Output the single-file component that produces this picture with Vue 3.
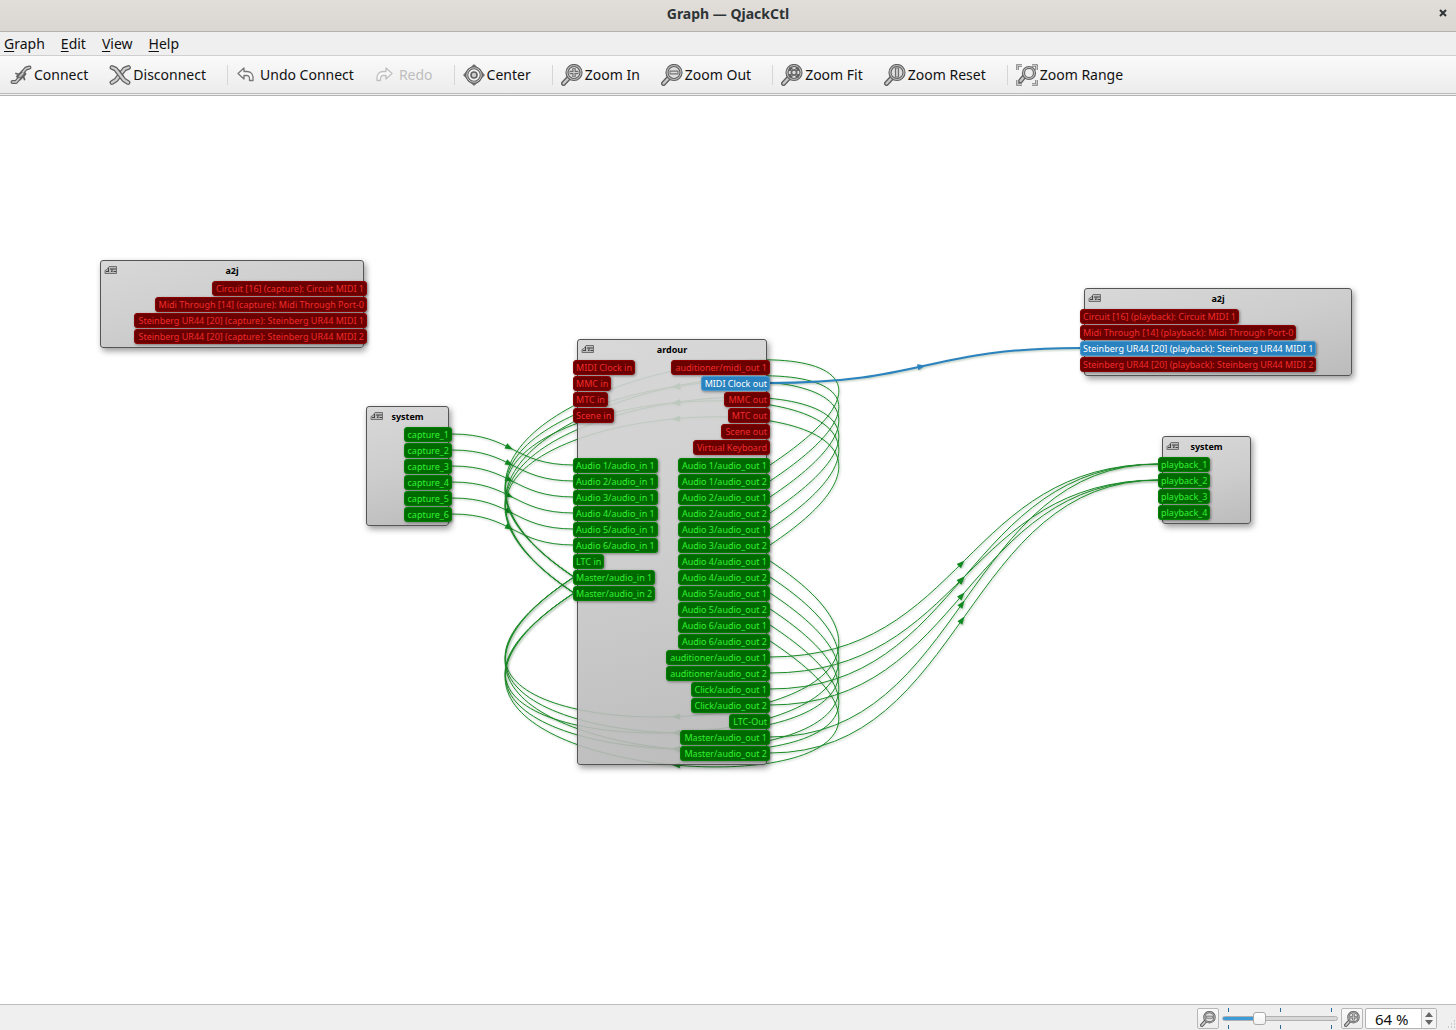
<script setup>
const menus = ['Graph', 'Edit', 'View', 'Help']

const tools = [
  { id: 'connect', label: 'Connect' },
  { id: 'disconnect', label: 'Disconnect' },
  { sep: true },
  { id: 'undo', label: 'Undo Connect' },
  { id: 'redo', label: 'Redo', disabled: true },
  { sep: true },
  { id: 'center', label: 'Center' },
  { sep: true },
  { id: 'in', label: 'Zoom In' },
  { id: 'out', label: 'Zoom Out' },
  { sep: true },
  { id: 'fit', label: 'Zoom Fit' },
  { id: 'reset', label: 'Zoom Reset' },
  { sep: true },
  { id: 'range', label: 'Zoom Range' }
]

const midi = (...names) => names.map(name => ({ name, type: 'midi' }))
const audio = (...names) => names.map(name => ({ name, type: 'audio' }))

const nodes = [
  {
    id: 'a2j-capture', title: 'a2j', x: 100, y: 164, w: 264,
    groups: [{
      ins: [],
      outs: midi(
        'Circuit [16] (capture): Circuit MIDI 1',
        'Midi Through [14] (capture): Midi Through Port-0',
        'Steinberg UR44 [20] (capture): Steinberg UR44 MIDI 1',
        'Steinberg UR44 [20] (capture): Steinberg UR44 MIDI 2'
      )
    }]
  },
  {
    id: 'system-capture', title: 'system', x: 366, y: 310, w: 83,
    groups: [{ ins: [], outs: audio('capture_1', 'capture_2', 'capture_3', 'capture_4', 'capture_5', 'capture_6') }]
  },
  {
    id: 'ardour', title: 'ardour', x: 577, y: 243, w: 190,
    groups: [
      {
        ins: midi('MIDI Clock in', 'MMC in', 'MTC in', 'Scene in'),
        outs: [
          { name: 'auditioner/midi_out 1', type: 'midi' },
          { name: 'MIDI Clock out', type: 'selected' },
          ...midi('MMC out', 'MTC out', 'Scene out', 'Virtual Keyboard')
        ]
      },
      {
        ins: audio(
          'Audio 1/audio_in 1', 'Audio 2/audio_in 1', 'Audio 3/audio_in 1',
          'Audio 4/audio_in 1', 'Audio 5/audio_in 1', 'Audio 6/audio_in 1',
          'LTC in', 'Master/audio_in 1', 'Master/audio_in 2'
        ),
        outs: audio(
          'Audio 1/audio_out 1', 'Audio 1/audio_out 2', 'Audio 2/audio_out 1', 'Audio 2/audio_out 2',
          'Audio 3/audio_out 1', 'Audio 3/audio_out 2', 'Audio 4/audio_out 1', 'Audio 4/audio_out 2',
          'Audio 5/audio_out 1', 'Audio 5/audio_out 2', 'Audio 6/audio_out 1', 'Audio 6/audio_out 2',
          'auditioner/audio_out 1', 'auditioner/audio_out 2', 'Click/audio_out 1', 'Click/audio_out 2',
          'LTC-Out', 'Master/audio_out 1', 'Master/audio_out 2'
        )
      }
    ]
  },
  {
    id: 'a2j-playback', title: 'a2j', x: 1084, y: 192, w: 268,
    groups: [{
      ins: [
        { name: 'Circuit [16] (playback): Circuit MIDI 1', type: 'midi' },
        { name: 'Midi Through [14] (playback): Midi Through Port-0', type: 'midi' },
        { name: 'Steinberg UR44 [20] (playback): Steinberg UR44 MIDI 1', type: 'selected' },
        { name: 'Steinberg UR44 [20] (playback): Steinberg UR44 MIDI 2', type: 'midi' }
      ],
      outs: []
    }]
  },
  {
    id: 'system-playback', title: 'system', x: 1162, y: 340, w: 89,
    groups: [{ ins: audio('playback_1', 'playback_2', 'playback_3', 'playback_4'), outs: [] }]
  }
]

const PORT_PITCH = 16
const GROUP_GAP = 2
const FIRST_PORT = 28
const OVERHANG = 3

function anchor(nodeId, side, group, index) {
  const node = nodes.find(n => n.id === nodeId)
  const above = node.groups.slice(0, group)
    .reduce((sum, g) => sum + Math.max(g.ins.length, g.outs.length) * PORT_PITCH + GROUP_GAP, 0)
  return {
    x: side === 'outs' ? node.x + node.w + OVERHANG : node.x - OVERHANG,
    y: node.y + FIRST_PORT + above + index * PORT_PITCH
  }
}

// Forward links are S-curves; links back into the same node bow around it.
function link(a, b, bow = 0, selected = false) {
  const dx = b.x - a.x
  const reach = dx > 0 ? dx / 2 : 300
  const d = `M${a.x} ${a.y}C${a.x + reach} ${a.y + bow} ${b.x - reach} ${b.y + bow} ${b.x} ${b.y}`
  const mx = (a.x + b.x) / 2
  const my = (a.y + b.y) / 2 + 0.75 * bow
  const angle = Math.atan2(b.y - a.y, dx > 0 ? dx - reach : dx - 2 * reach) * 180 / Math.PI
  return { d, selected, arrow: `translate(${mx} ${my}) rotate(${angle})` }
}

const links = []
for (let i = 0; i < 6; i++) {
  links.push(link(anchor('system-capture', 'outs', 0, i), anchor('ardour', 'ins', 1, i)))
}
for (let i = 0; i < 12; i++) {
  links.push(link(anchor('ardour', 'outs', 1, i), anchor('ardour', 'ins', 1, 7 + i % 2), i < 6 ? -200 : 197))
}
for (const i of [12, 13, 14, 15, 17, 18]) {
  const target = i === 13 || i === 15 || i === 18 ? 1 : 0
  links.push(link(anchor('ardour', 'outs', 1, i), anchor('system-playback', 'ins', 0, target)))
}
links.push(link(anchor('ardour', 'outs', 0, 1), anchor('a2j-playback', 'ins', 0, 2), 0, true))
</script>

<template>
  <div class="window">
    <svg class="defs" width="0" height="0" aria-hidden="true">
      <symbol id="lens" viewBox="0 0 22 22">
        <path d="M2.500 19.500L9 12.500" stroke="#606060" stroke-width="5" stroke-linecap="round" />
        <path d="M2.500 19.500L9 12.500" stroke="#cacaca" stroke-width="2.200" stroke-linecap="round" />
        <circle cx="13" cy="8.500" r="7" fill="#dedede" stroke="#606060" stroke-width="3.200" />
        <circle cx="13" cy="8.500" r="7" fill="none" stroke="#bcbcbc" stroke-width="1.100" />
      </symbol>
      <symbol id="i-in" viewBox="0 0 22 22">
        <use href="#lens" width="22" height="22" />
        <path d="M13 4V13M8.500 8.500H17.500" stroke="#6e6e6e" stroke-width="3.400" />
        <path d="M13 4.500V12.500M9 8.500H17" stroke="#ccc" stroke-width="1.200" />
      </symbol>
      <symbol id="i-out" viewBox="0 0 22 22">
        <use href="#lens" width="22" height="22" />
        <path d="M8.500 8.500H17.500" stroke="#6e6e6e" stroke-width="4" />
        <path d="M9.500 8.500H16.500" stroke="#ddd" stroke-width="1.600" />
      </symbol>
      <symbol id="i-fit" viewBox="0 0 22 22">
        <use href="#lens" width="22" height="22" />
        <path d="M9 7V4.500H11.500M14.500 4.500H17V7M17 10V12.500H14.500M11.500 12.500H9V10" stroke="#5e5e5e" stroke-width="1.800" />
        <circle cx="13" cy="8.500" r="2.600" stroke="#6a6a6a" stroke-width="1.800" />
      </symbol>
      <symbol id="i-reset" viewBox="0 0 22 22">
        <use href="#lens" width="22" height="22" />
        <path d="M13 3.500V13.500" stroke="#6e6e6e" stroke-width="4.200" />
        <path d="M13 4.500V12.500" stroke="#ddd" stroke-width="1.600" />
      </symbol>
      <symbol id="i-range" viewBox="0 0 22 22">
        <path d="M4.500 17L9 11.500" stroke="#606060" stroke-width="5" stroke-linecap="round" />
        <path d="M4.500 17L9 11.500" stroke="#c6c6c6" stroke-width="2.200" stroke-linecap="round" />
        <circle cx="13" cy="9" r="5.500" fill="#eee" stroke="#606060" stroke-width="3.200" />
        <circle cx="13" cy="9" r="5.500" stroke="#c0c0c0" stroke-width="1.100" />
        <path d="M1.500 6V1.500H6M16 1.500H20.500V6M20.500 16V20.500H16M6 20.500H1.500V16" stroke="#7c7c7c" stroke-width="2.600" />
        <path d="M1.500 6V1.500H6M16 1.500H20.500V6M20.500 16V20.500H16M6 20.500H1.500V16" stroke="#ddd" stroke-width="0.800" />
      </symbol>
      <symbol id="i-connect" viewBox="0 0 22 22">
        <path d="M2.500 18H6L9 14.500M13 8L16 4.500L19.500 3.500" stroke="#626262" stroke-width="4" stroke-linecap="round" stroke-linejoin="round" />
        <path d="M7 12.500L13 6.500L15.500 10L10 15.500Z" fill="#8e8e8e" stroke="#626262" stroke-width="1.800" stroke-linejoin="round" />
        <path d="M6 9.500L9 10.500M13.500 12.500L14.500 15.500" stroke="#626262" stroke-width="1.800" stroke-linecap="round" />
        <path d="M2.500 18H6L9 14.500M13 8L16 4.500L19.500 3.500" stroke="#ccc" stroke-width="1.600" stroke-linecap="round" stroke-linejoin="round" />
        <path d="M9.500 12.500L13 9" stroke="#ccc" stroke-width="1.200" />
      </symbol>
      <symbol id="i-disconnect" viewBox="0 0 22 22">
        <path d="M3 3.500L6.500 5L15 16L19 18.500M19.500 3.500L15.500 5L7 16L3 18.500" stroke="#606060" stroke-width="4.800" stroke-linecap="round" stroke-linejoin="round" />
        <path d="M19.500 3.500L15.500 5L7 16L3 18.500" stroke="#cecece" stroke-width="2.400" stroke-linecap="round" stroke-linejoin="round" />
        <path d="M8 6.800L13.500 13.800" stroke="#606060" stroke-width="4.800" />
        <path d="M3 3.500L6.500 5L15 16L19 18.500" stroke="#cecece" stroke-width="2.400" stroke-linecap="round" stroke-linejoin="round" />
      </symbol>
      <symbol id="i-undo" viewBox="0 0 22 22">
        <path d="M2 9.500L8 4V7.500H11C15.500 7.500 17.500 10.500 17 16.500H13.500C13.800 13 13 11.500 11 11.500H8V15Z" fill="#f8f8f8" stroke="#777" stroke-width="1.300" stroke-linejoin="round" />
      </symbol>
      <symbol id="i-redo" viewBox="0 0 22 22">
        <path d="M17 9.500L11 4V7.500H8C3.500 7.500 1.500 10.500 2 16.500H5.500C5.200 13 6 11.500 8 11.500H11V15Z" fill="#f8f8f8" stroke="#c0c0c0" stroke-width="1.300" stroke-linejoin="round" />
      </symbol>
      <symbol id="i-center" viewBox="0 0 22 22">
        <path d="M11 1.500L20.500 11L11 20.500L1.500 11Z" stroke="#707070" stroke-width="2.400" stroke-linejoin="round" />
        <circle cx="11" cy="11" r="7.200" fill="#f2f2f2" stroke="#606060" stroke-width="3" />
        <circle cx="11" cy="11" r="7.200" stroke="#ccc" stroke-width="1" />
        <circle cx="11" cy="11" r="3" fill="#ccc" stroke="#606060" stroke-width="1.600" />
      </symbol>
      <symbol id="i-jack" viewBox="0 0 14 10">
        <path d="M1 8.500V5.500L3 4.500L5 1.500H12.500V8.500Z" fill="#bcbcbc" stroke="#707070" stroke-width="1" />
        <path d="M2 6.500H5M4.500 3V6M7 3V5H9V3M7 6.500H8.500M11 3V5M9.500 6.500H12" stroke="#444" stroke-width="1" />
      </symbol>
    </svg>

    <header class="titlebar">
      <h1>Graph — QjackCtl</h1>
      <button class="close" type="button" aria-label="Close">
        <svg width="8" height="8" viewBox="0 0 8 8"><path d="M1 1L7 7M7 1L1 7" stroke="#2e3436" stroke-width="2" /></svg>
      </button>
    </header>

    <nav class="menubar">
      <button v-for="m in menus" :key="m" type="button"><u>{{ m[0] }}</u>{{ m.slice(1) }}</button>
    </nav>

    <div class="toolbar" role="toolbar">
      <template v-for="(t, i) in tools" :key="i">
        <span v-if="t.sep" class="sep"></span>
        <button v-else type="button" :disabled="t.disabled">
          <svg class="icon" width="22" height="22"><use :href="'#i-' + t.id" /></svg>
          <span>{{ t.label }}</span>
        </button>
      </template>
    </div>

    <main class="canvas">
      <svg class="links" aria-hidden="true">
        <g v-for="(l, i) in links" :key="i" :class="['link', { selected: l.selected }]">
          <path :d="l.d" />
          <polygon points="-8,-3 0,0 -8,3" :transform="l.arrow" />
        </g>
      </svg>

      <section
        v-for="n in nodes"
        :key="n.id"
        class="node"
        :style="{ left: n.x + 'px', top: n.y + 'px', width: n.w + 'px' }"
      >
        <svg class="badge" width="14" height="10"><use href="#i-jack" /></svg>
        <h2>{{ n.title }}</h2>
        <div v-for="(g, gi) in n.groups" :key="gi" class="group">
          <ul class="ins">
            <li v-for="p in g.ins" :key="p.name" :class="['port', p.type]">{{ p.name }}</li>
          </ul>
          <ul class="outs">
            <li v-for="p in g.outs" :key="p.name" :class="['port', p.type]">{{ p.name }}</li>
          </ul>
        </div>
      </section>
    </main>

    <footer class="statusbar">
      <button class="zoom" type="button" aria-label="Zoom out">
        <svg class="icon" width="16" height="16"><use href="#i-out" /></svg>
      </button>
      <div class="slider">
        <span class="ticks"></span>
        <input type="range" min="10" max="190" value="64" aria-label="Zoom" />
        <span class="ticks"></span>
      </div>
      <button class="zoom" type="button" aria-label="Zoom in">
        <svg class="icon" width="16" height="16"><use href="#i-in" /></svg>
      </button>
      <div class="spin">
        <input type="text" value="64 %" aria-label="Zoom level" />
        <div class="steps">
          <button type="button" aria-label="Increase"><svg width="8" height="5" viewBox="0 0 8 5"><path d="M0 5L4 0L8 5Z" fill="#666" /></svg></button>
          <button type="button" aria-label="Decrease"><svg width="8" height="5" viewBox="0 0 8 5"><path d="M0 0L4 5L8 0Z" fill="#666" /></svg></button>
        </div>
      </div>
      <svg class="grip" width="10" height="10" viewBox="0 0 10 10">
        <path d="M8 1h1M5 4h1M8 4h1M2 7h1M5 7h1M8 7h1" stroke="#aaa" stroke-width="1" />
      </svg>
    </footer>
  </div>
</template>

<style>
body {
  margin: 0;
}
</style>

<style scoped>
.window {
  display: flex;
  flex-direction: column;
  min-height: 100vh;
  background: #efefef;
  color: #111;
  font: 14px/20px "Noto Sans", "Open Sans", sans-serif;
}

.defs {
  position: absolute;
}

button {
  border: 0;
  margin: 0;
  padding: 0;
  background: none;
  color: inherit;
  font: inherit;
}

svg,
symbol {
  fill: none;
}

.titlebar {
  position: relative;
  display: flex;
  align-items: center;
  justify-content: center;
  height: 31px;
  border-bottom: 1px solid #b5b1aa;
  background: linear-gradient(#e1deda, #dad6d1);
}

.titlebar h1 {
  margin: 0 0 4px;
  color: #2e3436;
  font-size: 14px;
  line-height: 20px;
  font-weight: 700;
}

.close {
  position: absolute;
  right: 9px;
  top: 9px;
  display: flex;
}

.menubar {
  display: flex;
  gap: 16px;
  height: 22px;
  padding: 1px 0 0 4px;
  border-bottom: 1px solid #cfcfcf;
}

.menubar u {
  text-underline-offset: 2px;
}

.toolbar {
  display: flex;
  align-items: center;
  gap: 4px;
  height: 37px;
  padding-left: 6px;
  border-bottom: 1px solid #bcbcbc;
  background: linear-gradient(#fafafa, #ececec);
}

.toolbar button {
  display: flex;
  align-items: center;
  gap: 2px;
  padding: 1px 13px 0 4px;
  white-space: nowrap;
}

.toolbar button:disabled {
  color: #bebebe;
}

.sep {
  width: 1px;
  height: 20px;
  margin-left: 4px;
  background: #d6d6d6;
}

.canvas {
  position: relative;
  flex: 1;
  margin-top: 1px;
  border-top: 1px solid #b4b4b4;
  background: #fff;
  overflow: hidden;
}

.links {
  position: absolute;
  inset: 0;
  width: 100%;
  height: 100%;
}

.link {
  fill: #108a20;
  stroke: #1a8c28;
  filter: drop-shadow(1px 1px 1px rgba(0, 60, 0, 0.3));
}

.link path {
  fill: none;
}

.link.selected {
  fill: #2a82be;
  stroke: #2a82be;
  stroke-width: 2;
}

.link polygon {
  stroke: none;
}

.node {
  position: absolute;
  box-sizing: border-box;
  padding-bottom: 3px;
  border: 1px solid #555;
  border-radius: 3px;
  background: linear-gradient(165deg, rgba(212, 212, 212, 0.9), rgba(200, 200, 200, 0.9) 50%, rgba(180, 180, 180, 0.9));
  box-shadow: 2px 3px 6px rgba(0, 0, 0, 0.4);
}

.badge {
  position: absolute;
  left: 3px;
  top: 4px;
}

.node h2 {
  margin: 0;
  height: 20px;
  color: #000;
  font-size: 9px;
  line-height: 19px;
  font-weight: 700;
  text-align: center;
}

.group {
  display: flex;
  justify-content: space-between;
  margin: 0 -4px 0 -5px;
}

.group + .group {
  margin-top: 3px;
}

.group ul {
  display: flex;
  flex-direction: column;
  gap: 1px;
  margin: 0;
  padding: 0;
  list-style: none;
}

.group .ins {
  align-items: flex-start;
}

.group .outs {
  align-items: flex-end;
}

.port {
  box-sizing: border-box;
  height: 15px;
  padding: 0 2px;
  border: 1px solid;
  border-radius: 3px;
  font-size: 9px;
  line-height: 14px;
  white-space: nowrap;
  box-shadow: 1px 1px 3px rgba(0, 0, 0, 0.4);
}

.outs .port {
  padding-left: 3px;
}

.midi {
  border-color: #8c0000;
  background: #6a0000;
  color: #f02c2c;
}

.audio {
  border-color: #008200;
  background: #006a00;
  color: #33f033;
}

.selected.port {
  border-color: #4a9ad0;
  background: #2a82be;
  color: #fff;
}

.statusbar {
  display: flex;
  align-items: center;
  justify-content: flex-end;
  height: 25px;
  border-top: 1px solid #bdbdbd;
}

.zoom {
  display: flex;
  align-items: center;
  justify-content: center;
  box-sizing: border-box;
  width: 22px;
  height: 21px;
  margin-top: 2px;
  border: 1px solid #b8b8b8;
  border-radius: 2px;
  background: linear-gradient(#fafafa, #ededed);
}

.slider {
  display: flex;
  flex-direction: column;
  justify-content: space-between;
  width: 116px;
  height: 21px;
  margin: 2px 3px 0;
}

.ticks {
  display: flex;
  height: 4px;
  margin: 0 6px;
  background:
    linear-gradient(#2a6a96, #2a6a96) left / 1px 4px no-repeat,
    linear-gradient(#2a6a96, #2a6a96) center / 1px 4px no-repeat,
    linear-gradient(#2a6a96, #2a6a96) right / 1px 4px no-repeat;
}

.slider input {
  appearance: none;
  width: 100%;
  height: 13px;
  margin: 0;
  background: transparent;
}

.slider input::-webkit-slider-runnable-track {
  height: 5px;
  box-sizing: border-box;
  border: 1px solid #b0b0b0;
  border-radius: 3px;
  background: linear-gradient(90deg, #3d9bd8 32%, #d8d8d8 32%);
}

.slider input::-webkit-slider-thumb {
  appearance: none;
  box-sizing: border-box;
  width: 13px;
  height: 13px;
  margin-top: -5px;
  border: 1px solid #aaa;
  border-radius: 3px;
  background: linear-gradient(#fff, #f2f2f2);
}

.spin {
  display: flex;
  box-sizing: border-box;
  width: 72px;
  height: 21px;
  margin: 2px 0 0 2px;
  border: 1px solid #b4b4b4;
  border-radius: 2px;
  background: #fff;
}

.spin input {
  flex: 1;
  min-width: 0;
  padding: 0 0 0 9px;
  border: 0;
  background: none;
  color: #111;
  font: inherit;
  font-size: 15px;
}

.steps {
  display: flex;
  flex-direction: column;
  justify-content: center;
  gap: 3px;
  width: 14px;
  border-left: 1px solid #c4c4c4;
  background: #f4f4f4;
}

.steps button {
  display: flex;
  justify-content: center;
}

.grip {
  align-self: flex-end;
  margin-left: 9px;
}
</style>
